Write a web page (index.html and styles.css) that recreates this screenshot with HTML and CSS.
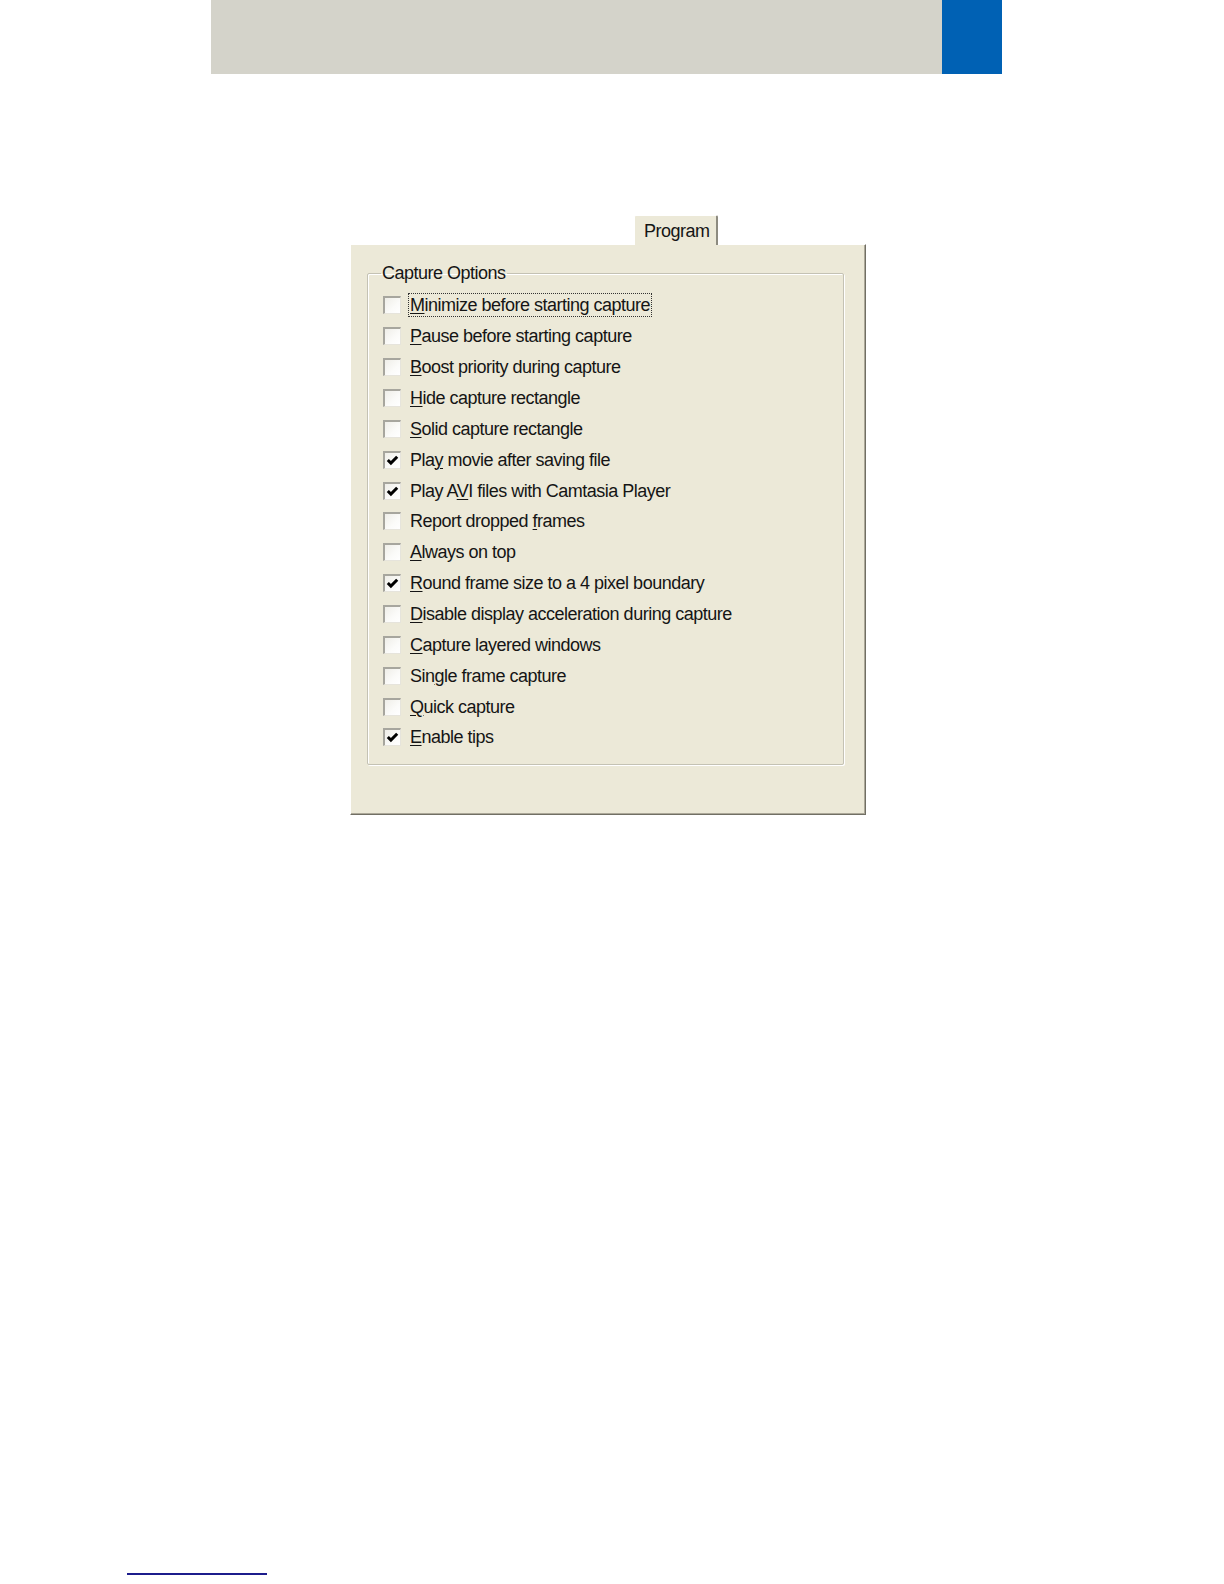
FILE: index.html
```html
<!DOCTYPE html>
<html lang="en">
<head>
<meta charset="utf-8">
<title>Program - Capture Options</title>
<link rel="stylesheet" href="styles.css">
</head>
<body>
<div class="header">
  <div class="header-gray"></div>
  <div class="header-blue"></div>
</div>

<div class="dialog">
  <div class="tabs">
    <div class="tab">Program</div>
  </div>
  <div class="panel">
    <fieldset class="group">
      <legend class="legend">Capture Options</legend>
      <div class="row"><span class="box"></span><span class="label focus"><u>M</u>inimize before starting capture</span></div>
      <div class="row"><span class="box"></span><span class="label"><u>P</u>ause before starting capture</span></div>
      <div class="row"><span class="box"></span><span class="label"><u>B</u>oost priority during capture</span></div>
      <div class="row"><span class="box"></span><span class="label"><u>H</u>ide capture rectangle</span></div>
      <div class="row"><span class="box"></span><span class="label"><u>S</u>olid capture rectangle</span></div>
      <div class="row"><span class="box checked"><svg viewBox="0 0 16 16" class="tick"><path d="M3 7.5 L6.3 10.8 L13 4" /></svg></span><span class="label">Pla<u>y</u> movie after saving file</span></div>
      <div class="row"><span class="box checked"><svg viewBox="0 0 16 16" class="tick"><path d="M3 7.5 L6.3 10.8 L13 4" /></svg></span><span class="label">Play A<u>V</u>I files with Camtasia Player</span></div>
      <div class="row"><span class="box"></span><span class="label">Report dropped <u>f</u>rames</span></div>
      <div class="row"><span class="box"></span><span class="label"><u>A</u>lways on top</span></div>
      <div class="row"><span class="box checked"><svg viewBox="0 0 16 16" class="tick"><path d="M3 7.5 L6.3 10.8 L13 4" /></svg></span><span class="label"><u>R</u>ound frame size to a 4 pixel boundary</span></div>
      <div class="row"><span class="box"></span><span class="label"><u>D</u>isable display acceleration during capture</span></div>
      <div class="row"><span class="box"></span><span class="label"><u>C</u>apture layered windows</span></div>
      <div class="row"><span class="box"></span><span class="label">Sin<u>g</u>le frame capture</span></div>
      <div class="row"><span class="box"></span><span class="label"><u>Q</u>uick capture</span></div>
      <div class="row"><span class="box checked"><svg viewBox="0 0 16 16" class="tick"><path d="M3 7.5 L6.3 10.8 L13 4" /></svg></span><span class="label"><u>E</u>nable tips</span></div>
    </fieldset>
  </div>
</div>

<div class="footer-line"></div>
</body>
</html>
```

FILE: styles.css
```css
html, body {
  margin: 0;
  padding: 0;
  background: #ffffff;
}

html {
  height: 1584px;
  overflow: hidden;
}

body {
  height: 1584px;
  overflow: hidden;
  font-family: "Liberation Sans", Arial, sans-serif;
  color: #151515;
}

.header {
  display: flex;
  margin-left: 211px;
  height: 74px;
}

.header-gray {
  width: 731px;
  background: #d4d3ca;
}

.header-blue {
  width: 60px;
  background: #0061b4;
}

.dialog {
  margin-left: 350px;
  margin-top: 141px;
  width: 516px;
}

.tabs {
  display: flex;
  padding-left: 284px;
}

.tab {
  position: relative;
  z-index: 1;
  width: 84px;
  height: 30px;
  margin-bottom: -1px;
  background: #ece9d8;
  border-top: 1px solid #ffffff;
  border-left: 1px solid #ffffff;
  border-right: 2px solid #8d8b80;
  box-sizing: border-box;
  font-size: 18px;
  letter-spacing: -0.5px;
  line-height: 30px;
  padding-left: 9px;
  border-radius: 2px 2px 0 0;
}

.panel {
  box-sizing: border-box;
  height: 571px;
  background: #ece9d8;
  border-top: 1px solid #ffffff;
  border-left: 1px solid #ffffff;
  border-right: 1px solid #716f64;
  border-bottom: 1px solid #716f64;
  box-shadow: inset -1px -1px 0 #aca899;
  padding: 17px 0 0 16px;
}

.group {
  box-sizing: border-box;
  width: 477px;
  height: 503px;
  margin: 0;
  padding: 6px 0 0 15px;
  border: 1px solid #c4c2b4;
  box-shadow: 1px 1px 0 #ffffff, inset 1px 1px 0 #ffffff;
  border-radius: 2px;
}

.legend {
  font-size: 18px;
  letter-spacing: -0.5px;
  line-height: 22px;
  padding: 0 1px;
  margin-left: -2px;
}

.row {
  display: flex;
  align-items: center;
  height: 30.86px;
  font-size: 18px;
  letter-spacing: -0.5px;
}

.box {
  box-sizing: border-box;
  width: 18px;
  height: 18px;
  flex: none;
  background: linear-gradient(135deg, #efeee8 0%, #fbfbf9 60%, #ffffff 100%);
  border-top: 2px solid #a7a69e;
  border-left: 2px solid #a7a69e;
  border-right: 1px solid #e6e4dc;
  border-bottom: 1px solid #e6e4dc;
  margin-right: 9px;
}

.tick {
  display: block;
  width: 15px;
  height: 15px;
}

.tick path {
  fill: none;
  stroke: #000000;
  stroke-width: 3.2;
  stroke-linecap: butt;
  stroke-linejoin: miter;
}

.label {
  line-height: 22px;
  padding: 0 1px;
  border: 1px solid transparent;
  margin-left: -2px;
}

.label u {
  text-decoration-thickness: 1px;
  text-underline-offset: 2px;
}

.focus {
  border: 1px dotted #333333;
}

.footer-line {
  margin-left: 127px;
  margin-top: 758px;
  width: 140px;
  height: 2px;
  background: #1c1c8c;
}
```
